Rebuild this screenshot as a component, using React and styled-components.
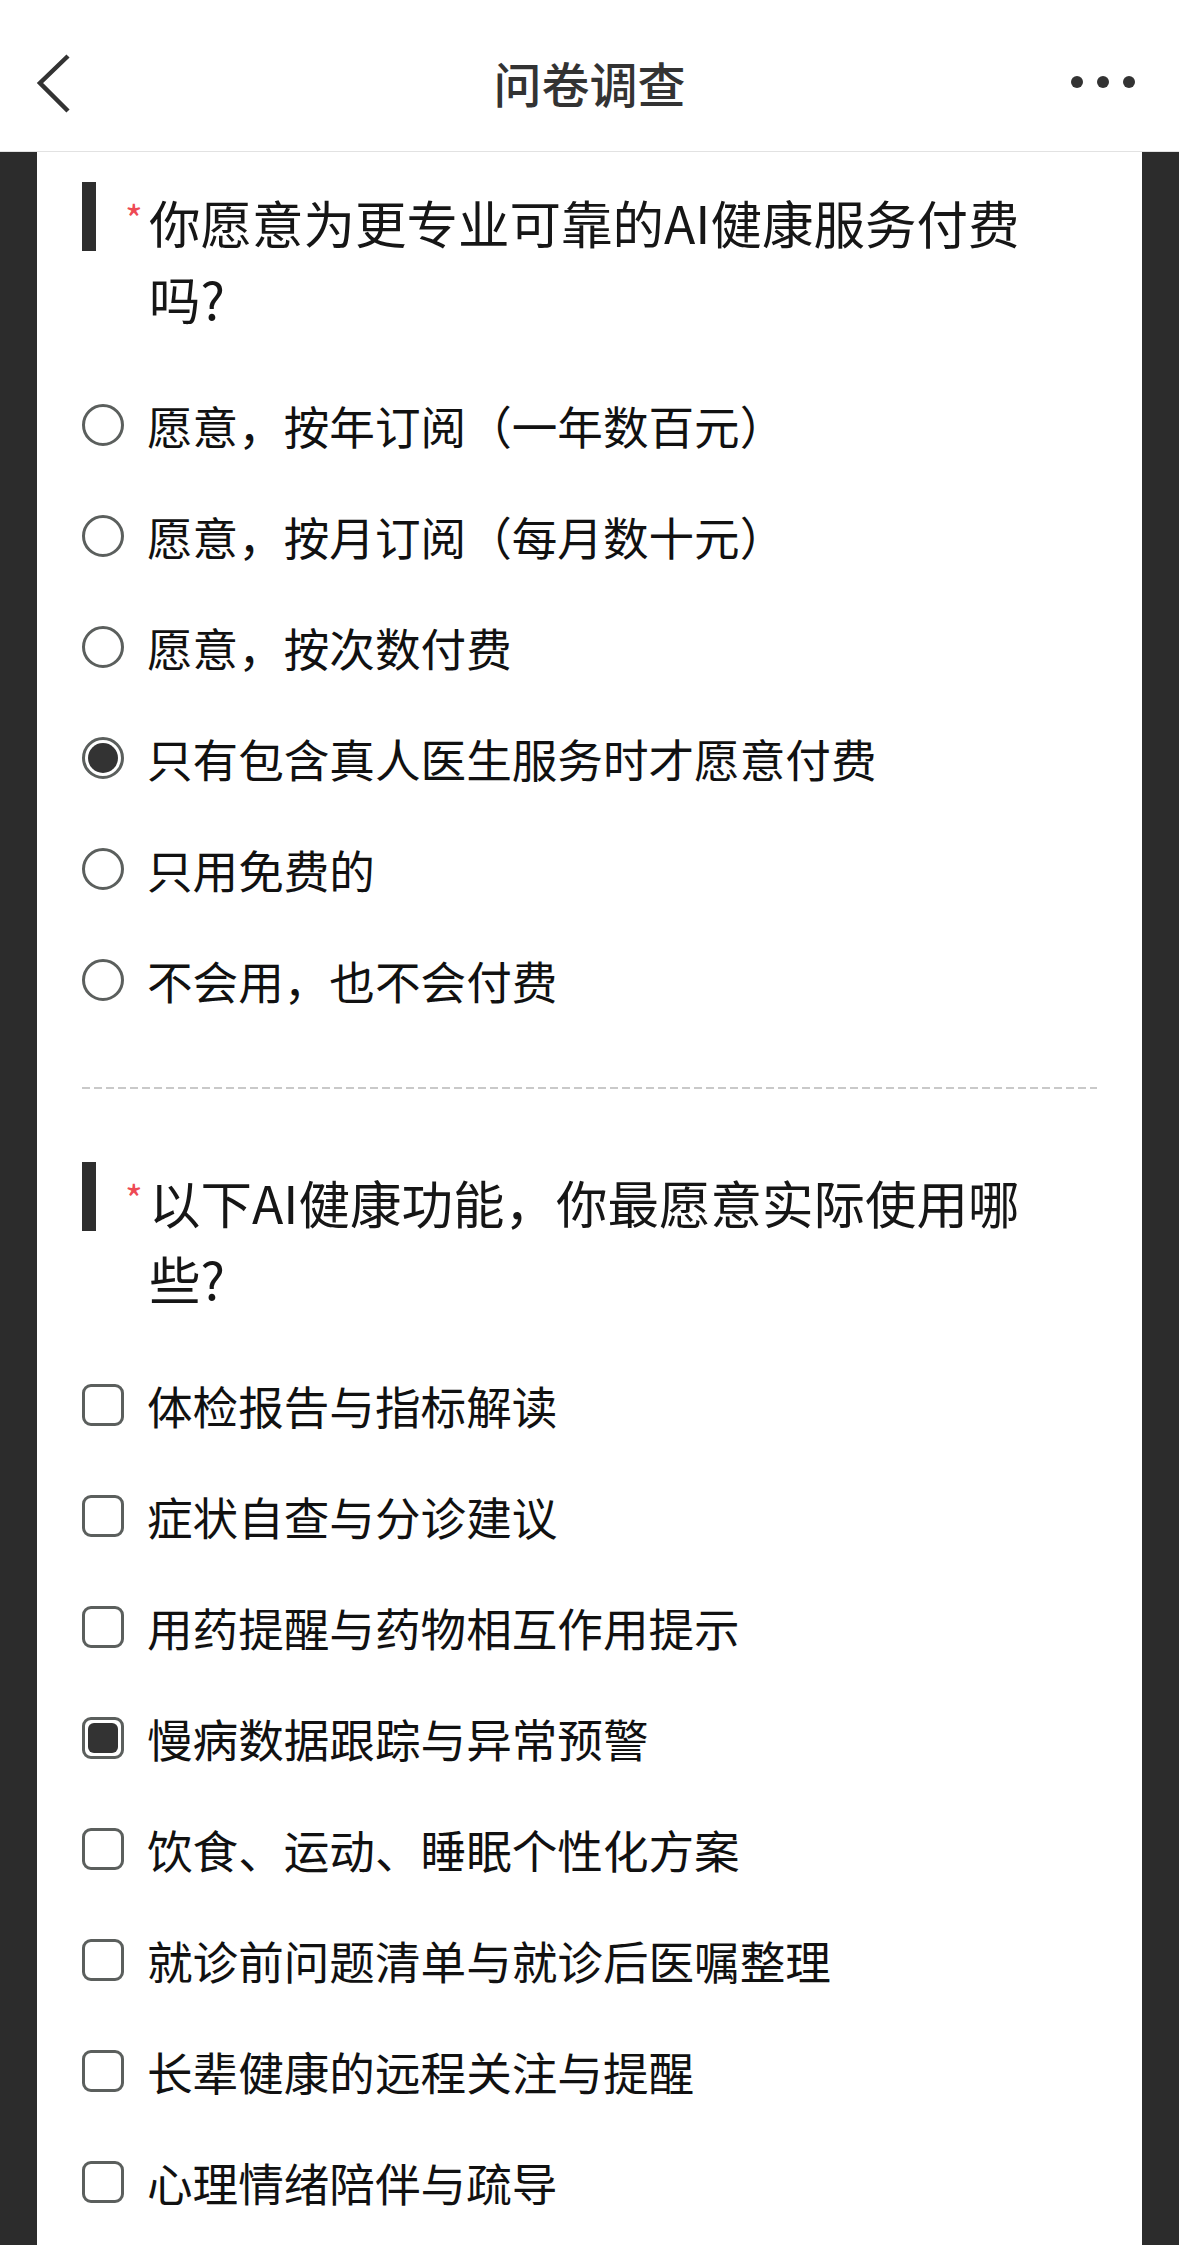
import styled, { createGlobalStyle } from "styled-components";

// ── Data ──────────────────────────────────────────────────────────────────────

const questions = [
  {
    id: "pay",
    type: "radio",
    title: "你愿意为更专业可靠的AI健康服务付费吗?",
    options: [
      "愿意，按年订阅（一年数百元）",
      "愿意，按月订阅（每月数十元）",
      "愿意，按次数付费",
      "只有包含真人医生服务时才愿意付费",
      "只用免费的",
      "不会用，也不会付费",
    ],
    selected: [3],
  },
  {
    id: "features",
    type: "checkbox",
    title: "以下AI健康功能，你最愿意实际使用哪些?",
    options: [
      "体检报告与指标解读",
      "症状自查与分诊建议",
      "用药提醒与药物相互作用提示",
      "慢病数据跟踪与异常预警",
      "饮食、运动、睡眠个性化方案",
      "就诊前问题清单与就诊后医嘱整理",
      "长辈健康的远程关注与提醒",
      "心理情绪陪伴与疏导",
    ],
    selected: [3],
  },
];

// ── Global ────────────────────────────────────────────────────────────────────

const GlobalStyle = createGlobalStyle`
  * { box-sizing: border-box; }
  html, body {
    margin: 0;
    padding: 0;
    background: #2c2c2c;
  }
  body {
    font-family: "Noto Sans CJK SC", "Noto Sans", sans-serif;
    color: #111;
  }
`;

// ── Header ────────────────────────────────────────────────────────────────────

const Header = styled.header`
  height: 152px;
  background: #ffffff;
  border-bottom: 1px solid #e2e2e2;
  display: grid;
  grid-template-columns: 200px 1fr 200px;
  align-items: center;
  padding: 16px 36px 0 36px;
`;

const BackButton = styled.button`
  border: 0;
  background: none;
  padding: 0;
  width: 40px;
  height: 60px;
  display: flex;
  align-items: center;
`;

const HeaderTitle = styled.h1`
  margin: 0;
  text-align: center;
  font-size: 48px;
  font-weight: 500;
  color: #333;
  line-height: 1;
  padding-bottom: 4px;
`;

const MoreButton = styled.div`
  justify-self: end;
  display: flex;
  gap: 14px;
  padding-right: 8px;
  padding-bottom: 4px;
`;

const Dot = styled.span`
  width: 12px;
  height: 12px;
  border-radius: 50%;
  background: #333;
`;

// ── Card ──────────────────────────────────────────────────────────────────────

const Card = styled.main`
  margin: 0 37px;
  background: #ffffff;
  min-height: 2093px;
  padding: 32px 45px 20px;
`;

const Question = styled.section`
  display: flex;
  flex-direction: column;
`;

const TitleRow = styled.div`
  display: flex;
  align-items: flex-start;
`;

const Bar = styled.span`
  flex-shrink: 0;
  width: 14px;
  height: 69px;
  margin-top: -2px;
  margin-right: 29px;
  background: #2e2e2e;
`;

const Required = styled.span`
  flex-shrink: 0;
  width: 24px;
  font-size: 38px;
  line-height: 38px;
  padding-top: 15px;
  color: #ee4a54;
`;

const TitleText = styled.h2`
  flex: 1;
  margin: 0 45px 0 0;
  font-size: 51.5px;
  font-weight: 400;
  line-height: 76px;
  color: #161616;
`;

const Options = styled.ul`
  list-style: none;
  margin: 33px 0 0;
  padding: 0;
`;

const Option = styled.li`
  height: 111px;
  display: flex;
  align-items: center;
  gap: 23px;
  font-size: 45.6px;
  color: #111;
`;

const Indicator = styled.span`
  flex-shrink: 0;
  width: 42px;
  height: 42px;
  border: 3px solid #5b5f5d;
  border-radius: ${(p) => (p.$round ? "50%" : "9px")};
  padding: 3px;
  display: flex;
`;

const Fill = styled.span`
  flex: 1;
  background: #333;
  border-radius: ${(p) => (p.$round ? "50%" : "6px")};
`;

const Divider = styled.hr`
  border: 0;
  height: 2px;
  margin: 52px 0 75px;
  background-image: repeating-linear-gradient(
    to right,
    #c9c9c9 0 8px,
    transparent 8px 12px
  );
`;

// ── Icons ─────────────────────────────────────────────────────────────────────

function ChevronLeft() {
  return (
    <svg width="36" height="60" viewBox="0 0 36 60" fill="none">
      <path d="M32 2 L4 29 L32 57" stroke="#333" strokeWidth="4.5" />
    </svg>
  );
}

// ── Page ──────────────────────────────────────────────────────────────────────

export default function App() {
  return (
    <>
      <GlobalStyle />
      <Header>
        <BackButton aria-label="返回">
          <ChevronLeft />
        </BackButton>
        <HeaderTitle>问卷调查</HeaderTitle>
        <MoreButton>
          <Dot />
          <Dot />
          <Dot />
        </MoreButton>
      </Header>

      <Card>
        {questions.map((q, qi) => {
          const round = q.type === "radio";
          return (
            <div key={q.id}>
              {qi > 0 && <Divider />}
              <Question>
                <TitleRow>
                  <Bar />
                  <Required>*</Required>
                  <TitleText>{q.title}</TitleText>
                </TitleRow>
                <Options>
                  {q.options.map((label, i) => (
                    <Option key={label}>
                      <Indicator $round={round}>
                        {q.selected.includes(i) && <Fill $round={round} />}
                      </Indicator>
                      {label}
                    </Option>
                  ))}
                </Options>
              </Question>
            </div>
          );
        })}
      </Card>
    </>
  );
}
